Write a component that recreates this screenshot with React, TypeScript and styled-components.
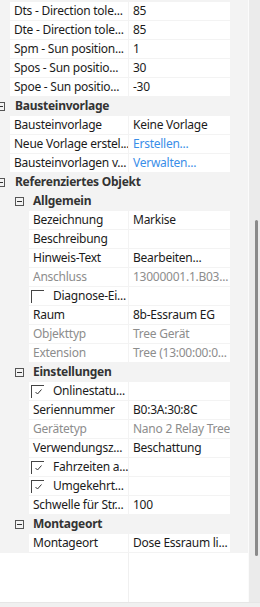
import styled, { createGlobalStyle } from "styled-components";

type Tone = "normal" | "muted" | "link";

type Item =
  | { kind: "category"; level: number; label: string }
  | {
      kind: "property";
      level: number;
      name: string;
      value?: string;
      tone?: Tone;
      checked?: boolean;
    };

const items: Item[] = [
  { kind: "property", level: 1, name: "Dts - Direction tole...", value: "85" },
  { kind: "property", level: 1, name: "Dte - Direction tole...", value: "85" },
  { kind: "property", level: 1, name: "Spm - Sun position...", value: "1" },
  { kind: "property", level: 1, name: "Spos - Sun positio...", value: "30" },
  { kind: "property", level: 1, name: "Spoe - Sun positio...", value: "-30" },
  { kind: "category", level: 1, label: "Bausteinvorlage" },
  { kind: "property", level: 1, name: "Bausteinvorlage", value: "Keine Vorlage" },
  { kind: "property", level: 1, name: "Neue Vorlage erstel...", value: "Erstellen...", tone: "link" },
  { kind: "property", level: 1, name: "Bausteinvorlagen v...", value: "Verwalten...", tone: "link" },
  { kind: "category", level: 1, label: "Referenziertes Objekt" },
  { kind: "category", level: 2, label: "Allgemein" },
  { kind: "property", level: 2, name: "Bezeichnung", value: "Markise" },
  { kind: "property", level: 2, name: "Beschreibung", value: "" },
  { kind: "property", level: 2, name: "Hinweis-Text", value: "Bearbeiten..." },
  { kind: "property", level: 2, name: "Anschluss", value: "13000001.1.B03...", tone: "muted" },
  { kind: "property", level: 2, name: "Diagnose-Ei...", checked: false },
  { kind: "property", level: 2, name: "Raum", value: "8b-Essraum EG" },
  { kind: "property", level: 2, name: "Objekttyp", value: "Tree Gerät", tone: "muted" },
  { kind: "property", level: 2, name: "Extension", value: "Tree (13:00:00:0...", tone: "muted" },
  { kind: "category", level: 2, label: "Einstellungen" },
  { kind: "property", level: 2, name: "Onlinestatu...", checked: true },
  { kind: "property", level: 2, name: "Seriennummer", value: "B0:3A:30:8C" },
  { kind: "property", level: 2, name: "Gerätetyp", value: "Nano 2 Relay Tree", tone: "muted" },
  { kind: "property", level: 2, name: "Verwendungsz...", value: "Beschattung" },
  { kind: "property", level: 2, name: "Fahrzeiten a...", checked: true },
  { kind: "property", level: 2, name: "Umgekehrt...", checked: true },
  { kind: "property", level: 2, name: "Schwelle für Str...", value: "100" },
  { kind: "category", level: 2, label: "Montageort" },
  { kind: "property", level: 2, name: "Montageort", value: "Dose Essraum li..." },
];

const GlobalStyle = createGlobalStyle`
  html, body {
    margin: 0;
    padding: 0;
    background: #f0f0f0;
  }
  body {
    font-family: "Noto Sans", "Open Sans", sans-serif;
    font-size: 12px;
    letter-spacing: -0.25px;
  }
`;

const Frame = styled.div`
  width: 260px;
  height: 607px;
  display: flex;
  flex-direction: column;
  overflow: hidden;
  background: #f0f0f0;
`;

const Body = styled.div`
  height: 603px;
  display: flex;
`;

const Grid = styled.div`
  width: 248px;
  display: flex;
  flex-direction: column;
  gap: 1px;
  padding-top: 2px;
  background: #f3f3f3;
  box-sizing: border-box;
`;

const CategoryRow = styled.div<{ $level: number }>`
  height: 18px;
  flex: none;
  display: flex;
  align-items: center;
  margin-left: ${(p) => (p.$level === 1 ? -4 : 15)}px;
`;

const ExpandBox = styled.span`
  position: relative;
  width: 9px;
  height: 9px;
  box-sizing: border-box;
  border: 1px solid #555;
  flex: none;

  &::after {
    content: "";
    position: absolute;
    left: 1px;
    right: 1px;
    top: 3px;
    height: 1px;
    background: #333;
  }
`;

const CategoryLabel = styled.span<{ $level: number }>`
  margin-left: ${(p) => (p.$level === 1 ? 10 : 9)}px;
  font-weight: 700;
  color: #333;
  line-height: 18px;
  white-space: nowrap;
`;

const PropertyRow = styled.div<{ $level: number }>`
  height: 18px;
  flex: none;
  display: grid;
  grid-template-columns: 1fr 101px;
  column-gap: 1px;
  margin-left: ${(p) => (p.$level === 1 ? 10 : 29)}px;
  width: ${(p) => (p.$level === 1 ? 220 : 201)}px;
`;

const toneColor = (tone: Tone) =>
  tone === "muted" ? "#8d8d8d" : tone === "link" ? "#3a8ee8" : "#1b1b1b";

const Cell = styled.div<{ $tone: Tone }>`
  background: #fff;
  padding-left: 4px;
  line-height: 18px;
  white-space: nowrap;
  overflow: hidden;
  color: ${(p) => toneColor(p.$tone)};
  display: flex;
  align-items: center;
`;

const CheckBox = styled.span`
  width: 13px;
  height: 13px;
  box-sizing: border-box;
  border-left: 1px solid #444;
  border-top: 1px solid #444;
  margin-left: -2px;
  margin-right: 9px;
  flex: none;
  display: flex;
  align-items: center;
  justify-content: center;
`;

const Filler = styled.div`
  flex: 1;
  display: grid;
  grid-template-columns: 128px 1fr;
  column-gap: 1px;
  background: #f0f0f0;
`;

const FillerColumn = styled.div`
  background: #fff;
`;

const ScrollTrack = styled.div`
  width: 11px;
  border-left: 1px solid #fbfbfb;
  background: #ebebeb;
  display: flex;
  flex-direction: column;
  padding-top: 220px;
`;

const ScrollThumb = styled.div`
  width: 3px;
  height: 336px;
  margin-left: 6px;
  border-radius: 2px;
  background: #8a8a8a;
`;

const BottomStrip = styled.div`
  height: 4px;
  background: #f0f0f0;
  border-top: 1px solid #e6e6e6;
`;

const CheckMark = () => (
  <svg width="9" height="8" viewBox="0 0 9 8">
    <polyline
      points="1.5,4 3.5,6 7.5,1.5"
      fill="none"
      stroke="#333"
      strokeWidth="1"
    />
  </svg>
);

const PropertyLine = ({ item }: { item: Extract<Item, { kind: "property" }> }) => {
  const tone = item.tone ?? "normal";
  const nameTone: Tone = tone === "link" ? "normal" : tone;
  return (
    <PropertyRow $level={item.level}>
      <Cell $tone={nameTone}>
        {item.checked !== undefined && (
          <CheckBox>{item.checked && <CheckMark />}</CheckBox>
        )}
        {item.name}
      </Cell>
      <Cell $tone={tone}>{item.value ?? ""}</Cell>
    </PropertyRow>
  );
};

export default function App() {
  return (
    <>
      <GlobalStyle />
      <Frame>
        <Body>
          <Grid>
            {items.map((item, i) =>
              item.kind === "category" ? (
                <CategoryRow key={i} $level={item.level}>
                  <ExpandBox />
                  <CategoryLabel $level={item.level}>{item.label}</CategoryLabel>
                </CategoryRow>
              ) : (
                <PropertyLine key={i} item={item} />
              )
            )}
            <Filler>
              <FillerColumn />
              <FillerColumn />
            </Filler>
          </Grid>
          <ScrollTrack>
            <ScrollThumb />
          </ScrollTrack>
        </Body>
        <BottomStrip />
      </Frame>
    </>
  );
}
